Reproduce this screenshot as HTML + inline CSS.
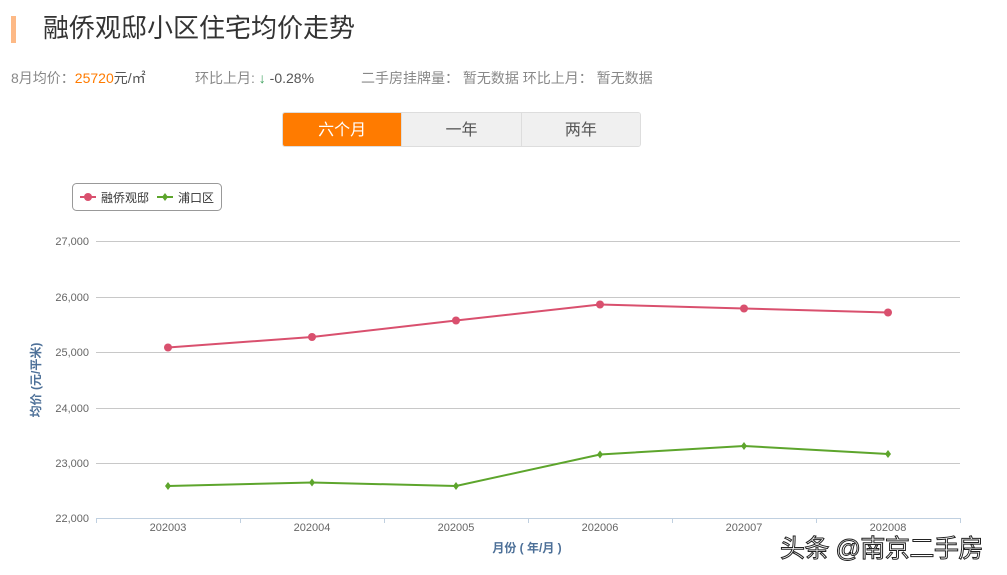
<!DOCTYPE html>
<html><head><meta charset="utf-8"><style>
*{margin:0;padding:0}
body{width:1007px;height:575px;background:#fff;position:relative;overflow:hidden;font-family:"Liberation Sans","Noto Sans CJK SC",sans-serif}
.bar{position:absolute;left:11px;top:16px;width:5px;height:27px;background:#fdb986}
.title{position:absolute;left:43px;top:11px;font-size:26px;color:#333;line-height:34px}
.info{position:absolute;top:68px;font-size:14px;color:#888;line-height:20px;white-space:nowrap}
.tabs{position:absolute;left:282px;top:112px;width:359px;height:35px;display:flex;border:1px solid #ddd;border-radius:3px;overflow:hidden;box-sizing:border-box}
.tabs div{flex:1;text-align:center;line-height:36px;font-size:16px;color:#555;background:#f0f0f0;border-left:1px solid #ddd}
.tabs div.on{background:#ff7b00;color:#fff;border-left:none}
.wm{position:absolute;left:780px;top:529px;font-size:25px;color:#fff;-webkit-text-stroke:1px #222;white-space:nowrap;letter-spacing:-0.5px}
</style></head><body>
<div class="bar"></div>
<div class="title">融侨观邸小区住宅均价走势</div>
<div class="info" style="left:11px">8月均价：<span style="color:#ff7b00">25720</span><span style="color:#555">元/㎡</span></div>
<div class="info" style="left:195px">环比上月: <span style="color:#3aa05a">↓</span> <span style="color:#555">-0.28%</span></div>
<div class="info" style="left:361px">二手房挂牌量： 暂无数据 环比上月： 暂无数据</div>
<div class="tabs"><div class="on">六个月</div><div>一年</div><div>两年</div></div>
<svg width="1007" height="575" style="position:absolute;left:0;top:0" font-family="Liberation Sans, Noto Sans CJK SC, sans-serif">
<rect x="72.5" y="183.5" width="149" height="27" rx="4" fill="#fff" stroke="#999"/>
<line x1="80" y1="197" x2="96" y2="197" stroke="#d9506e" stroke-width="2"/><circle cx="88" cy="197" r="4" fill="#d9506e"/>
<text x="101" y="202" font-size="12" fill="#333">融侨观邸</text>
<line x1="157" y1="197" x2="173" y2="197" stroke="#5da52c" stroke-width="2"/><path d="M165 193L168 197L165 201L162 197Z" fill="#5da52c"/>
<text x="178" y="202" font-size="12" fill="#333">浦口区</text>
<g stroke="#c8c8c8" stroke-width="1">
<line x1="96" y1="241.5" x2="960" y2="241.5"/><line x1="96" y1="297.5" x2="960" y2="297.5"/><line x1="96" y1="352.5" x2="960" y2="352.5"/><line x1="96" y1="408.5" x2="960" y2="408.5"/><line x1="96" y1="463.5" x2="960" y2="463.5"/></g>
<line x1="96" y1="518.5" x2="960" y2="518.5" stroke="#c0d0e0"/>
<g stroke="#c0d0e0"><line x1="96.5" y1="518" x2="96.5" y2="523"/><line x1="240.5" y1="518" x2="240.5" y2="523"/><line x1="384.5" y1="518" x2="384.5" y2="523"/><line x1="528.5" y1="518" x2="528.5" y2="523"/><line x1="672.5" y1="518" x2="672.5" y2="523"/><line x1="816.5" y1="518" x2="816.5" y2="523"/><line x1="960.5" y1="518" x2="960.5" y2="523"/></g>
<g font-size="11" fill="#666" text-anchor="end">
<text x="89" y="245">27,000</text><text x="89" y="301">26,000</text><text x="89" y="356">25,000</text><text x="89" y="412">24,000</text><text x="89" y="467">23,000</text><text x="89" y="522">22,000</text></g>
<g font-size="11" fill="#666" text-anchor="middle">
<text x="168" y="531">202003</text><text x="312" y="531">202004</text><text x="456" y="531">202005</text><text x="600" y="531">202006</text><text x="744" y="531">202007</text><text x="888" y="531">202008</text></g>
<text x="527" y="552" font-size="12" fill="#4d7098" text-anchor="middle" font-weight="bold">月份 ( 年/月 )</text>
<text transform="translate(40,380) rotate(-90)" font-size="12" fill="#4d7098" text-anchor="middle" font-weight="bold">均价 (元/平米)</text>
<polyline points="168,347.5 312,337 456,320.5 600,304.5 744,308.5 888,312.5" fill="none" stroke="#d9506e" stroke-width="2"/>
<g fill="#d9506e"><circle cx="168" cy="347.5" r="4"/><circle cx="312" cy="337" r="4"/><circle cx="456" cy="320.5" r="4"/><circle cx="600" cy="304.5" r="4"/><circle cx="744" cy="308.5" r="4"/><circle cx="888" cy="312.5" r="4"/></g>
<polyline points="168,486 312,482.5 456,486 600,454.5 744,446 888,454" fill="none" stroke="#5da52c" stroke-width="2"/>
<g fill="#5da52c"><path d="M168 482l3 4-3 4-3-4z"/><path d="M312 478.5l3 4-3 4-3-4z"/><path d="M456 482l3 4-3 4-3-4z"/><path d="M600 450.5l3 4-3 4-3-4z"/><path d="M744 442l3 4-3 4-3-4z"/><path d="M888 450l3 4-3 4-3-4z"/></g>
</svg>
<div class="wm">头条 @南京二手房</div>
</body></html>
